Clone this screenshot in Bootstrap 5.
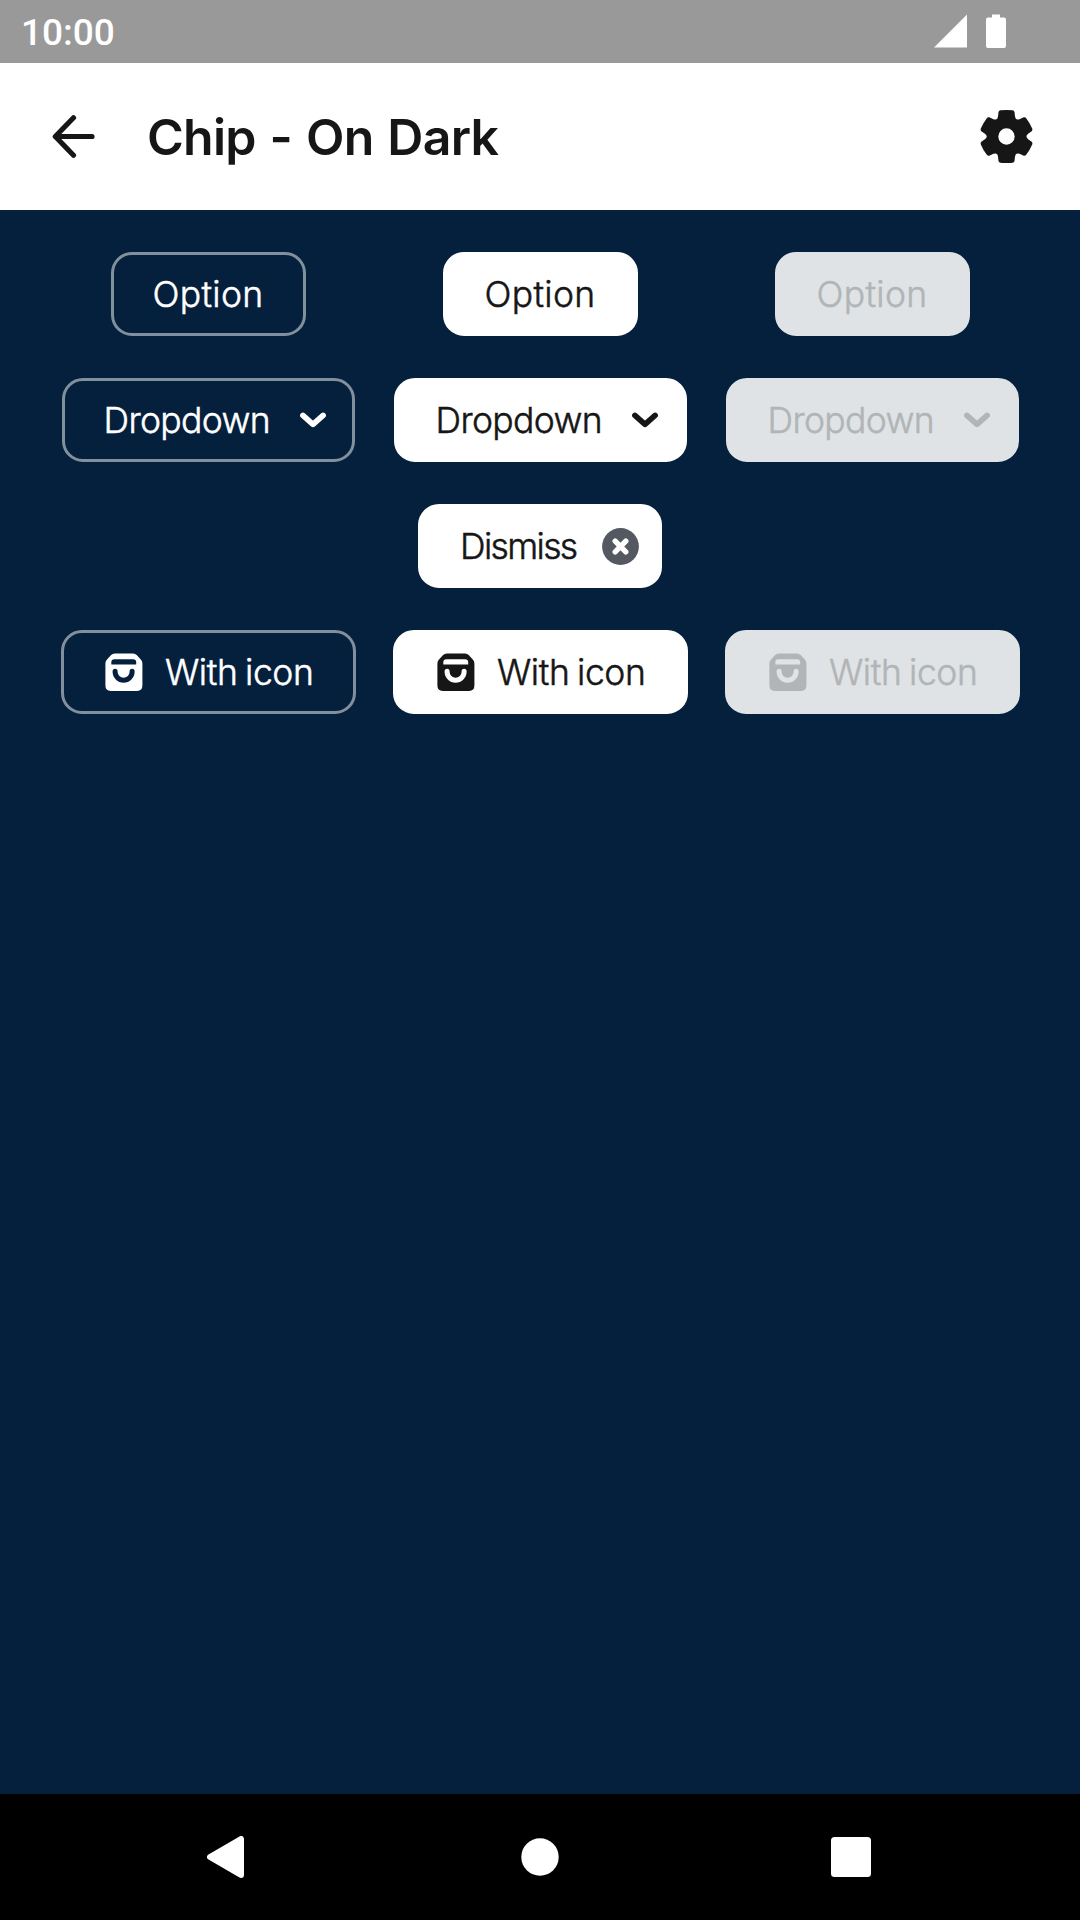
<!DOCTYPE html>
<html lang="en">
<head>
<meta charset="utf-8">
<meta name="viewport" content="width=device-width, initial-scale=1">
<title>Chip - On Dark</title>
<link rel="stylesheet" href="https://cdn.jsdelivr.net/npm/bootstrap@5.3.0/dist/css/bootstrap.min.css">
<style>
  body { height: 1920px; background: #05203c; color: #161616; font-family: Inter, "Liberation Sans", sans-serif; overflow: hidden; }
  svg { display: block; flex: none; }
  .status-bar { height: 63px; background: #999; padding: 1px 74px 0 21px; }
  .clock { font: 500 37px/1 Roboto, sans-serif; padding-top: 1px; }
  .app-bar { height: 147px; padding: 0 47px 1px 51px; }
  .app-title { font-size: 50px; font-weight: 600; line-height: 60px; letter-spacing: -.75px; word-spacing: 2px; margin-left: 51px; padding-top: 1px; }
  .stage { padding: 42px; }
  .chip-grid { --bs-gutter-x: 0; --bs-gutter-y: 42px; }
  .chip { --bs-btn-border-width: 3px; --bs-btn-border-radius: 21px; --bs-btn-padding-x: 0; --bs-btn-padding-y: 0;
    --bs-btn-font-size: 35.5px; --bs-btn-font-weight: 300; --bs-btn-line-height: 1; --bs-btn-disabled-opacity: 1;
    height: 84px; white-space: nowrap; }
  .chip span { padding-top: 2px; -webkit-text-stroke: .5px currentColor; }
  .chip-off { --bs-btn-color: #fff; --bs-btn-border-color: #828f9d; }
  .chip-on { --bs-btn-color: #161616; --bs-btn-bg: #fff; --bs-btn-border-color: #fff; }
  .chip-disabled { --bs-btn-disabled-color: #b1b5b6; --bs-btn-disabled-bg: #dfe3e6; --bs-btn-disabled-border-color: #dfe3e6; }
  .chip-option { width: 195px; letter-spacing: .3px; }
  .chip-dropdown { width: 293px; padding: 0 26px 0 39px; letter-spacing: -.65px; }
  .chip-dismiss { width: 244px; padding: 0 20.5px 0 39px; letter-spacing: -1.65px; }
  .chip-icon { width: 295px; padding: 0 39px 0 41px; letter-spacing: -.4px; word-spacing: -2px; }
  .nav-bar { height: 126px; padding: 0 209px 0 207px; }
  .home-dot { margin-left: 4px; }
</style>
</head>
<body class="d-flex flex-column">
<svg width="0" height="0" class="position-absolute" aria-hidden="true">
  <symbol id="chevron" viewBox="0 0 26 16"><path d="M2.9 3.400 13 12.400 23.1 3.400" fill="none" stroke="currentColor" stroke-width="5.6" stroke-linecap="round" stroke-linejoin="round"/></symbol>
  <symbol id="bag" viewBox="0 0 38 38"><path fill="currentColor" fill-rule="evenodd" d="M9.8.4H28Q30.200.4 31.700 2L35.800 6.500Q37.400 8.200 37.400 10.500V32.600Q37.400 37.900 32.100 37.900H5.700Q.4 37.900.4 32.600V10.500Q.4 8.200 2 6.500L6.100 2Q7.600.4 9.800.4ZM9.400 6.200Q6.300 6.200 6.300 9.500V11.600H31.200V9.500Q31.200 6.200 28.100 6.200ZM7.600 18.200V18.800A11 11 0 0 0 29.600 18.800V18.200A2.500 2.500 0 0 0 24.600 18.200V18.800A6 6 0 0 1 12.600 18.800V18.200A2.500 2.500 0 0 0 7.600 18.200Z"/></symbol>
</svg>

<header class="status-bar d-flex align-items-center justify-content-between text-white">
  <span class="clock">10:00</span>
  <svg width="72" height="36" viewBox="0 0 72 36" fill="#fff"><path d="M0 33.500H33V0.500ZM58 .5V3.500H54Q52 3.500 52 5.500V32Q52 34 54 34H70Q72 34 72 32V5.500Q72 3.500 70 3.500H66V.5Z"/></svg>
</header>

<nav class="app-bar d-flex align-items-center bg-white">
  <svg width="45" height="44" viewBox="0 0 45 44" fill="none" stroke="#161616" stroke-width="5.200" stroke-linecap="round" stroke-linejoin="round"><path d="M41 22.500H4.500M22.500 3.800 4.300 22.500 22.500 41.200"/></svg>
  <h1 class="app-title mb-0">Chip - On Dark</h1>
  <svg class="ms-auto" width="54" height="54" viewBox="-27.500 -27.500 54 54" fill="#161616">
    <defs><path id="tooth" d="M-14-15Q-9-16-8.500-20L-8-24.500Q-7.600-26-6-26.200Q0-27 6-26.200Q7.600-26 8-24.500L8.500-20Q9-16 14-15L8-8.500H-8Z"/></defs>
    <path fill-rule="evenodd" d="M-18.500 0A18.500 18.500 0 1 0 18.500 0A18.500 18.500 0 1 0-18.500 0ZM-8.200 0A8.200 8.200 0 1 1 8.200 0A8.200 8.200 0 1 1-8.200 0Z"/>
    <use href="#tooth"/><use href="#tooth" transform="rotate(60)"/><use href="#tooth" transform="rotate(120)"/><use href="#tooth" transform="rotate(180)"/><use href="#tooth" transform="rotate(240)"/><use href="#tooth" transform="rotate(300)"/>
  </svg>
</nav>

<main class="stage flex-grow-1">
  <div class="row row-cols-3 chip-grid mt-0 text-center">
    <div class="col mt-0 d-flex justify-content-center"><button class="btn chip chip-off chip-option d-flex align-items-center justify-content-center"><span>Option</span></button></div>
    <div class="col mt-0 d-flex justify-content-center"><button class="btn chip chip-on chip-option d-flex align-items-center justify-content-center"><span>Option</span></button></div>
    <div class="col mt-0 d-flex justify-content-center"><button class="btn chip chip-disabled chip-option d-flex align-items-center justify-content-center" disabled><span>Option</span></button></div>

    <div class="col d-flex justify-content-center"><button class="btn chip chip-off chip-dropdown d-flex align-items-center justify-content-between"><span>Dropdown</span><svg width="26" height="16"><use href="#chevron"/></svg></button></div>
    <div class="col d-flex justify-content-center"><button class="btn chip chip-on chip-dropdown d-flex align-items-center justify-content-between"><span>Dropdown</span><svg width="26" height="16"><use href="#chevron"/></svg></button></div>
    <div class="col d-flex justify-content-center"><button class="btn chip chip-disabled chip-dropdown d-flex align-items-center justify-content-between" disabled><span>Dropdown</span><svg width="26" height="16"><use href="#chevron"/></svg></button></div>

    <div class="col offset-4 d-flex justify-content-center"><button class="btn chip chip-on chip-dismiss d-flex align-items-center justify-content-between"><span>Dismiss</span><svg width="37" height="37" viewBox="-18.500 -18.500 37 37"><circle r="18.400" fill="#545860"/><path d="M-5.300-5.300 5.300 5.300M5.300-5.300-5.300 5.300" stroke="#fff" stroke-width="5.400" stroke-linecap="round"/></svg></button></div>
    <div class="w-100 mt-0"></div>

    <div class="col d-flex justify-content-center"><button class="btn chip chip-off chip-icon d-flex align-items-center justify-content-between"><svg width="38" height="38"><use href="#bag"/></svg><span>With icon</span></button></div>
    <div class="col d-flex justify-content-center"><button class="btn chip chip-on chip-icon d-flex align-items-center justify-content-between"><svg width="38" height="38"><use href="#bag"/></svg><span>With icon</span></button></div>
    <div class="col d-flex justify-content-center"><button class="btn chip chip-disabled chip-icon d-flex align-items-center justify-content-between" disabled><svg width="38" height="38"><use href="#bag"/></svg><span>With icon</span></button></div>
  </div>
</main>

<footer class="nav-bar bg-black d-flex align-items-center justify-content-between">
  <svg width="37" height="42" viewBox="0 0 37 42"><path d="M3 21 34 3V39Z" fill="#fff" stroke="#fff" stroke-width="6" stroke-linejoin="round"/></svg>
  <svg class="home-dot" width="38" height="38" viewBox="-19 -19 38 38"><circle r="18.700" fill="#fff"/></svg>
  <svg width="40" height="40"><rect width="40" height="40" rx="3.500" fill="#fff"/></svg>
</footer>
<script src="https://cdn.jsdelivr.net/npm/bootstrap@5.3.0/dist/js/bootstrap.bundle.min.js"></script>
</body>
</html>
